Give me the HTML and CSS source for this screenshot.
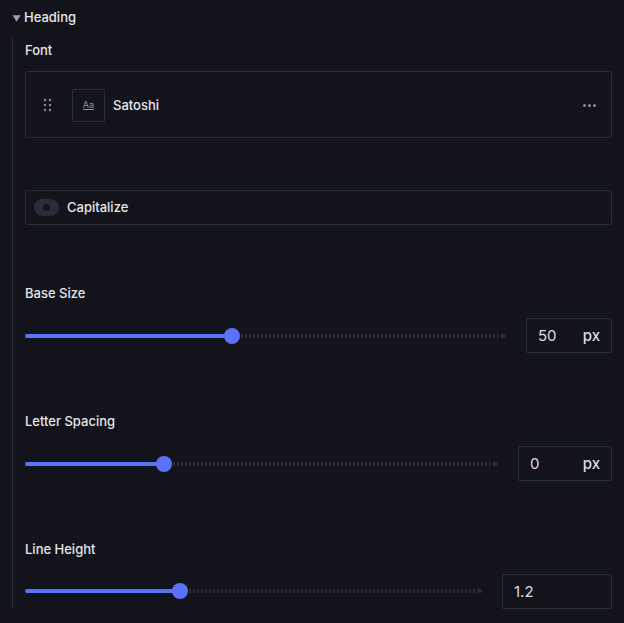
FILE: index.html
```html
<!DOCTYPE html>
<html lang="en">
<head>
<meta charset="utf-8">
<title>Heading</title>
<link rel="stylesheet" href="styles.css">
</head>
<body>
<section class="panel">
  <header class="panel-title">
    <svg class="caret" width="9" height="7" viewBox="0 0 9 7"><path d="M.5 .3H8.7L4.6 6.7Z"/></svg>
    <span>Heading</span>
  </header>
  <div class="group">
    <div class="label">Font</div>
    <div class="font-card">
      <svg class="grip" width="9" height="14" viewBox="0 0 9 14"><circle cx="2" cy="2" r="1.25"/><circle cx="7" cy="2" r="1.25"/><circle cx="2" cy="7" r="1.25"/><circle cx="7" cy="7" r="1.25"/><circle cx="2" cy="12" r="1.25"/><circle cx="7" cy="12" r="1.25"/></svg>
      <div class="preview"><span>Aa</span></div>
      <span class="font-name">Satoshi</span>
      <svg class="more" width="14" height="4" viewBox="0 0 14 4"><circle cx="1.5" cy="2.5" r="1.5"/><circle cx="6.5" cy="2.5" r="1.5"/><circle cx="11.5" cy="2.5" r="1.5"/></svg>
    </div>
    <div class="toggle-card"><span class="toggle"></span><span class="toggle-label">Capitalize</span></div>
    <div class="label">Base Size</div>
    <div class="control">
      <div class="slider"><div class="fill" style="width:207px"><i class="thumb"></i></div></div>
      <div class="field field-s"><span>50</span><b>px</b></div>
    </div>
    <div class="label">Letter Spacing</div>
    <div class="control">
      <div class="slider"><div class="fill" style="width:139px"><i class="thumb"></i></div></div>
      <div class="field field-m"><span>0</span><b>px</b></div>
    </div>
    <div class="label">Line Height</div>
    <div class="control control-last">
      <div class="slider"><div class="fill" style="width:155px"><i class="thumb"></i></div></div>
      <div class="field field-l"><span>1.2</span></div>
    </div>
  </div>
</section>
</body>
</html>
```
FILE: styles.css
```css
* { box-sizing: border-box; }
body {
  margin: 0;
  background: #13141b;
  color: #e6e6ea;
  font: 500 13px/20px Inter, "Liberation Sans", sans-serif;
}
.panel { padding: 7px 12px 14px; }
.panel-title { display: flex; align-items: center; gap: 3px; height: 20px; }
.caret { fill: #9a9bb5; margin-top: 2px; }
.group {
  margin-top: 11px;
  padding: 2px 0 0 12px;
  border-left: 1px solid #2a2b3c;
  height: 571px;
}
.label { height: 20px; }
.font-card {
  display: flex;
  align-items: center;
  height: 67px;
  margin-top: 11px;
  padding: 0 14px 0 17px;
  border: 1px solid #2a2b3c;
  border-radius: 2px;
}
.grip { fill: #8b8b98; margin: 1px 20px 0 0; }
.preview {
  display: flex;
  align-items: center;
  justify-content: center;
  width: 33px;
  height: 33px;
  margin: 1px 8px 0 0;
  border: 1px solid #2a2b3c;
  border-radius: 1px;
  color: #8f90a0;
  font-size: 9px;
  font-weight: 400;
  line-height: 9px;
}
.preview span { border-bottom: 1px solid #8f90a0; height: 10px; margin-bottom: 1px; }
.more { fill: #8b8b98; margin-left: auto; }
.toggle-card {
  display: flex;
  align-items: center;
  gap: 8px;
  height: 35px;
  margin: 52px 0 58px;
  padding-left: 8px;
  border: 1px solid #2a2b3c;
  border-radius: 2px;
}
.toggle {
  width: 25px;
  height: 17px;
  border-radius: 9px;
  background: radial-gradient(circle at center, #13141b 3.2px, #2a2c3e 4px);
}
.toggle-label { margin-bottom: 1px; }
.control {
  display: flex;
  align-items: flex-start;
  gap: 20px;
  height: 35px;
  margin: 15px 0 58px;
}
.slider {
  flex: 1;
  height: 4px;
  margin-top: 16px;
  border-radius: 2px;
  background:
    linear-gradient(#2a2c3e, #2a2c3e) right / 4px 4px no-repeat,
    repeating-linear-gradient(90deg, #2a2c3e 0 2px, transparent 2px 4px);
}
.control-last .slider { margin-top: 15px; }
.fill {
  display: flex;
  align-items: center;
  justify-content: flex-end;
  height: 4px;
  border-radius: 2px;
  background: #5b71f8;
}
.thumb {
  flex: none;
  width: 16px;
  height: 16px;
  margin-right: -8px;
  border-radius: 50%;
  background: #5b71f8;
}
.field {
  display: flex;
  align-items: center;
  justify-content: space-between;
  height: 35px;
  padding: 0 11px;
  border: 1px solid #2a2b3c;
  border-radius: 1px;
  color: #dddde1;
  font-size: 15px;
  font-weight: 400;
}
.field b { font-weight: 500; }
.field-s { width: 86px; }
.field-m { width: 94px; }
.field-l { width: 110px; }
```
